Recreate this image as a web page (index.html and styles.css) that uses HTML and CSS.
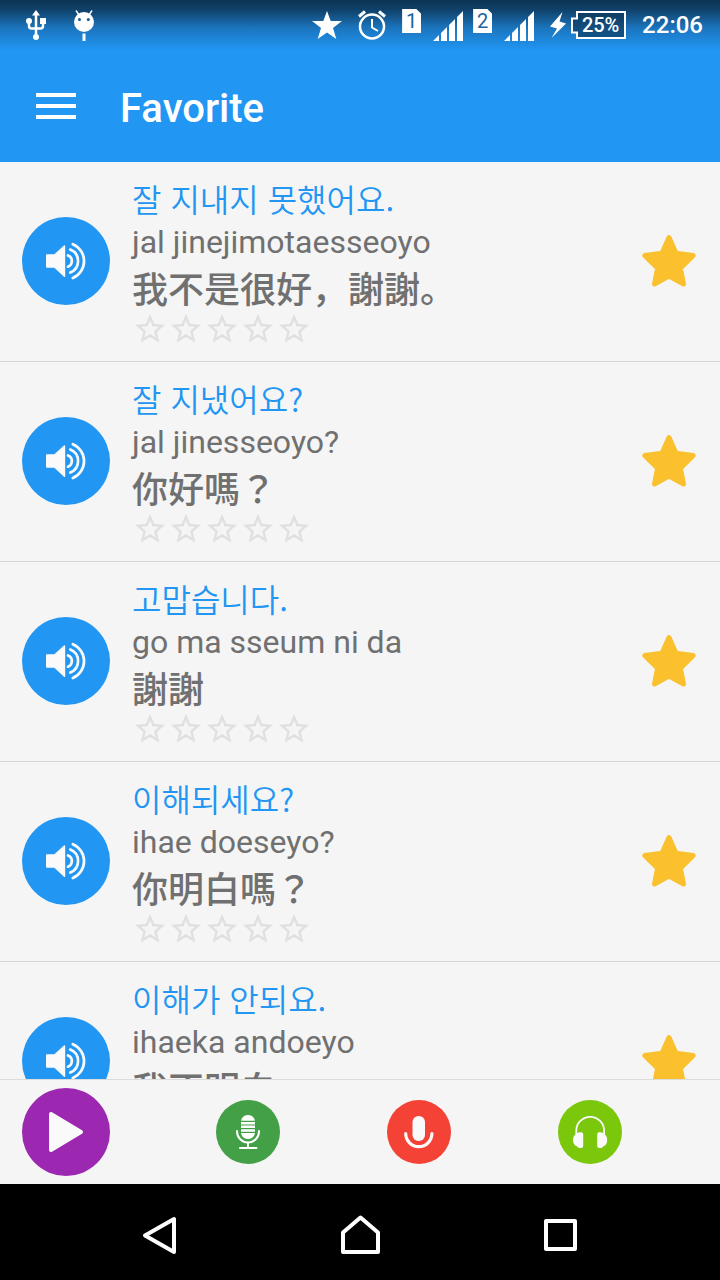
FILE: index.html
```html
<!DOCTYPE html>
<html lang="en">
<head>
  <meta charset="UTF-8">
  <title>Favorite</title>
  <meta name="viewport" content="width=device-width, initial-scale=1.0">
  <link rel="stylesheet" href="styles.css">
</head>
<body>

  <!-- Shared icons -->
  <svg class="sprite" aria-hidden="true">
    <symbol id="speaker" viewBox="0 0 88 88">
      <path d="M25 37.3h7.3L42 28.5q1.200-.6 1.200.8v29.600q0 1.400-1.200.8L32.300 50.800H25q-1 0-1-1V38.300q0-1 1-1z" fill="#fafafa"/>
      <path d="M46 38.500a6 6 0 0 1 0 11.200M48.300 32.600a12.400 12.400 0 0 1 0 23M50.800 27.200a18.300 18.300 0 0 1 0 33.800" fill="none" stroke="#fafafa" stroke-width="2.700" stroke-linecap="round"/>
    </symbol>
    <symbol id="rate" viewBox="0 0 24 24">
      <path d="M22 9.240l-7.190-.62L12 2 9.190 8.630 2 9.240l5.460 4.730L5.820 21 12 17.270 18.180 21l-1.630-7.030L22 9.240zM12 15.400l-3.760 2.270 1-4.280-3.320-2.880 4.380-.38L12 6.100l1.710 4.040 4.380.38-3.320 2.880 1 4.280L12 15.400z" fill="#e0e0e0"/>
    </symbol>
    <symbol id="favorite" viewBox="1 -1 56 56">
      <path d="M28 3.500L35 19.300 52.200 21.500 39.400 34.300 42.500 50 28 42 13.500 50 16.600 34.300 3.800 21.500 21 19.300z" fill="#fbc02d" stroke="#fbc02d" stroke-width="5" stroke-linejoin="round"/>
    </symbol>
    <symbol id="signal" viewBox="0 0 30 30">
      <path d="M0 30L6 24v6zM8 22l6-6v14H8zM16 14l6-6v22h-6zM24 6l6-6v30h-6z" fill="#fff"/>
    </symbol>
  </svg>

  <!-- Header -->
  <header class="header">
    <div class="status">
      <div class="status-left">
        <svg width="20" height="30" viewBox="0 0 20 30">
          <path d="M10 2v25M3 11v5q0 2.500 2.500 2.500h9q2.500 0 2.500-2.500v-5" fill="none" stroke="#fff" stroke-width="2.500"/>
          <path d="M10 0l4 5.500H6z" fill="#fff"/>
          <circle cx="3" cy="11" r="3" fill="#fff"/>
          <rect x="14" y="8" width="6" height="6" fill="#fff"/>
          <circle cx="10" cy="27" r="3" fill="#fff"/>
        </svg>
        <svg width="20" height="31" viewBox="0 0 20 31">
          <path d="M5 5L2 .5M15 5l3-4.500" stroke="#fff" stroke-width="1.500"/>
          <circle cx="10" cy="12" r="10" fill="#fff"/>
          <circle cx="5.500" cy="9.500" r="1.500" fill="#175a90"/>
          <circle cx="14.300" cy="9.500" r="1.500" fill="#175a90"/>
          <rect x="8.500" y="23.500" width="3" height="7.500" fill="#fff"/>
        </svg>
      </div>
      <div class="status-right">
        <svg width="30" height="30" viewBox="0 0 30 30">
          <path d="M15 1l3.700 10H30l-9 7 3.300 11L15 22.500 5.700 29 9 18 0 11h11.300z" fill="#fff"/>
        </svg>
        <svg width="28" height="30" viewBox="0 0 28 30">
          <circle cx="14" cy="16.500" r="12" fill="none" stroke="#fff" stroke-width="2.500"/>
          <path d="M14 9v8.500l6 3.500" fill="none" stroke="#fff" stroke-width="2"/>
          <path d="M1 6.500l6-5M27 6.500l-6-5" stroke="#fff" stroke-width="3"/>
        </svg>
        <div class="sims">
          <span class="sim">1</span>
          <svg width="30" height="30"><use href="#signal"/></svg>
          <span class="sim">2</span>
          <svg width="30" height="30"><use href="#signal"/></svg>
        </div>
        <div class="power">
          <svg width="16" height="26" viewBox="0 0 16 26">
            <path d="M12.500 0L0 14.500l7 2L1.500 26 16 11.500l-6.500-2z" fill="#fff"/>
          </svg>
          <span class="battery">
            <svg width="55" height="28" viewBox="0 0 55 28">
              <path d="M6 1h48v26H6v-5.500H1v-14h5z" fill="#0d3453" fill-opacity=".6" stroke="#fff" stroke-width="2"/>
            </svg>
            <span class="battery-text">25%</span>
          </span>
        </div>
        <span class="time">22:06</span>
      </div>
    </div>
    <div class="toolbar">
      <button class="menu-btn" aria-label="Menu">
        <svg width="40" height="26" viewBox="0 0 40 26">
          <path d="M0 2h40M0 13h40M0 24h40" stroke="#fff" stroke-width="4"/>
        </svg>
      </button>
      <h1 class="title">Favorite</h1>
    </div>
  </header>

  <!-- Phrases -->
  <ul class="list">
    <li class="row">
      <button class="round-btn big blue" aria-label="Listen"><svg class="icon"><use href="#speaker"/></svg></button>
      <div class="phrase">
        <div class="korean" lang="ko">잘 지내지 못했어요.</div>
        <div class="latin">jal jinejimotaesseoyo</div>
        <div class="chinese">我不是很好，謝謝。</div>
        <div class="rating">
          <svg><use href="#rate"/></svg><svg><use href="#rate"/></svg><svg><use href="#rate"/></svg><svg><use href="#rate"/></svg><svg><use href="#rate"/></svg>
        </div>
      </div>
      <button class="fav-btn" aria-label="Favorite"><svg class="icon"><use href="#favorite"/></svg></button>
    </li>
    <li class="row">
      <button class="round-btn big blue" aria-label="Listen"><svg class="icon"><use href="#speaker"/></svg></button>
      <div class="phrase">
        <div class="korean" lang="ko">잘 지냈어요?</div>
        <div class="latin">jal jinesseoyo?</div>
        <div class="chinese">你好嗎？</div>
        <div class="rating">
          <svg><use href="#rate"/></svg><svg><use href="#rate"/></svg><svg><use href="#rate"/></svg><svg><use href="#rate"/></svg><svg><use href="#rate"/></svg>
        </div>
      </div>
      <button class="fav-btn" aria-label="Favorite"><svg class="icon"><use href="#favorite"/></svg></button>
    </li>
    <li class="row">
      <button class="round-btn big blue" aria-label="Listen"><svg class="icon"><use href="#speaker"/></svg></button>
      <div class="phrase">
        <div class="korean" lang="ko">고맙습니다.</div>
        <div class="latin">go ma sseum ni da</div>
        <div class="chinese">謝謝</div>
        <div class="rating">
          <svg><use href="#rate"/></svg><svg><use href="#rate"/></svg><svg><use href="#rate"/></svg><svg><use href="#rate"/></svg><svg><use href="#rate"/></svg>
        </div>
      </div>
      <button class="fav-btn" aria-label="Favorite"><svg class="icon"><use href="#favorite"/></svg></button>
    </li>
    <li class="row">
      <button class="round-btn big blue" aria-label="Listen"><svg class="icon"><use href="#speaker"/></svg></button>
      <div class="phrase">
        <div class="korean" lang="ko">이해되세요?</div>
        <div class="latin">ihae doeseyo?</div>
        <div class="chinese">你明白嗎？</div>
        <div class="rating">
          <svg><use href="#rate"/></svg><svg><use href="#rate"/></svg><svg><use href="#rate"/></svg><svg><use href="#rate"/></svg><svg><use href="#rate"/></svg>
        </div>
      </div>
      <button class="fav-btn" aria-label="Favorite"><svg class="icon"><use href="#favorite"/></svg></button>
    </li>
    <li class="row">
      <button class="round-btn big blue" aria-label="Listen"><svg class="icon"><use href="#speaker"/></svg></button>
      <div class="phrase">
        <div class="korean" lang="ko">이해가 안되요.</div>
        <div class="latin">ihaeka andoeyo</div>
        <div class="chinese">我不明白</div>
        <div class="rating">
          <svg><use href="#rate"/></svg><svg><use href="#rate"/></svg><svg><use href="#rate"/></svg><svg><use href="#rate"/></svg><svg><use href="#rate"/></svg>
        </div>
      </div>
      <button class="fav-btn" aria-label="Favorite"><svg class="icon"><use href="#favorite"/></svg></button>
    </li>
  </ul>

  <!-- Player -->
  <div class="player">
    <button class="round-btn big purple" aria-label="Play">
      <svg class="icon" viewBox="0 0 88 88">
        <path d="M29 26l30 18-30 18z" fill="#fafafa" stroke="#fafafa" stroke-width="4" stroke-linejoin="round"/>
      </svg>
    </button>
    <div class="player-tools">
      <button class="round-btn green" aria-label="Studio microphone">
        <svg class="icon" viewBox="0 0 64 64">
          <rect x="25" y="15" width="14" height="24" rx="6.500" fill="#fff"/>
          <path d="M25 21.300h14M25 25h14M25 28.700h14M25 32.400h14" stroke="#43a047" stroke-width="1.200"/>
          <path d="M21 31v.5a11 11 0 0 0 22 0V31M32 43v5M24 48h16.500" fill="none" stroke="#fff" stroke-width="2" stroke-linecap="round"/>
        </svg>
      </button>
      <button class="round-btn red" aria-label="Record">
        <svg class="icon" viewBox="0 0 64 64">
          <rect x="25.500" y="16" width="12.500" height="25" rx="6" fill="#fafafa"/>
          <path d="M18.700 33.500a13.100 13.100 0 0 0 26.200 0" fill="none" stroke="#fafafa" stroke-width="3.200" stroke-linecap="round"/>
        </svg>
      </button>
      <button class="round-btn lime" aria-label="Headphones">
        <svg class="icon" viewBox="0 0 64 64">
          <path d="M18.300 35v-4.300a13.900 13.900 0 0 1 27.800 0V35" fill="none" stroke="#fafafa" stroke-width="1.800"/>
          <path d="M22 32.300h1.200q2 0 2 2V46q0 2-2 2H21.500q-1.800 0-2.500-1.700-4-1.300-4-6 0-4.800 3.300-6 1-2 3.700-2zM42.400 32.300h-1.200q-2 0-2 2V46q0 2 2 2h1.700q1.800 0 2.500-1.700 3.800-1.300 3.800-6 0-4.800-3.200-6-1-2-3.600-2z" fill="#fafafa"/>
        </svg>
      </button>
    </div>
  </div>

  <!-- System navigation -->
  <nav class="navbar">
    <button class="nav-btn" aria-label="Back">
      <svg width="48" height="48" viewBox="0 0 48 48"><path d="M9 27.500L38 11v33z"/></svg>
    </button>
    <button class="nav-btn" aria-label="Home">
      <svg width="48" height="48" viewBox="0 0 48 48"><path d="M24.500 9.500L42 24.500V44H7V24.500z"/></svg>
    </button>
    <button class="nav-btn" aria-label="Recent apps">
      <svg width="48" height="48" viewBox="0 0 48 48"><path d="M10 13h29v28H10z"/></svg>
    </button>
  </nav>

</body>
</html>
```
FILE: styles.css
```css
* {
  box-sizing: border-box;
}

body {
  margin: 0;
  height: 100vh;
  display: flex;
  flex-direction: column;
  font-family: Roboto, sans-serif;
  background: #f5f5f5;
  color: #707070;
}

button {
  padding: 0;
  border: none;
  background: none;
  cursor: pointer;
}

svg {
  display: block;
  flex: none;
}

.sprite {
  position: absolute;
  width: 0;
  height: 0;
}

/* Header */
.header {
  flex: none;
  color: #fff;
  background: #2196f3;
}

.status {
  display: flex;
  justify-content: space-between;
  align-items: center;
  height: 50px;
  padding: 0 17px 0 26px;
  background: linear-gradient(#0c3352, #10426b 20%, #1b75bd 56%, #2196f3);
}

.status-left {
  display: flex;
  align-items: center;
  gap: 28px;
}

.status-right {
  display: flex;
  align-items: center;
  gap: 16px;
}

.sims {
  display: flex;
  align-items: center;
  gap: 10px;
}

.sims svg {
  margin-top: 2px;
}

.sim {
  width: 19px;
  height: 24px;
  margin: 0 2px 8px 0;
  background: #fff;
  color: #1a659f;
  font-size: 20px;
  line-height: 24px;
  text-align: center;
  clip-path: polygon(0 0, 75% 0, 100% 20%, 100% 100%, 0 100%);
}

.power {
  display: flex;
  align-items: center;
  gap: 5px;
}

.battery {
  position: relative;
}

.battery-text {
  position: absolute;
  inset: 0 0 0 4px;
  font-size: 20px;
  font-weight: 500;
  line-height: 28px;
  text-align: center;
}

.time {
  font-size: 24px;
  font-weight: 500;
}

.toolbar {
  display: flex;
  align-items: center;
  gap: 44px;
  height: 112px;
  padding: 0 36px;
}

.title {
  margin: 0;
  padding-top: 4px;
  font-size: 40px;
  font-weight: 500;
}

/* List */
.list {
  flex: 1;
  min-height: 0;
  margin: 0;
  padding: 0;
  list-style: none;
  overflow-y: auto;
  scrollbar-width: none;
}

.row {
  display: flex;
  align-items: center;
  gap: 22px;
  padding: 0 22px 1px;
  border-bottom: 1px solid #d6d6d6;
}

.phrase {
  flex: 1;
  min-width: 0;
  padding: 17px 0 13px;
}

.korean {
  margin-bottom: 4px;
  font-family: "Noto Sans CJK KR", sans-serif;
  font-size: 32px;
  font-weight: 350;
  line-height: 38px;
  color: #2196f3;
}

.latin {
  font-size: 32px;
  line-height: 42px;
}

.chinese {
  font-family: "Noto Sans CJK JP", sans-serif;
  font-size: 36px;
  font-weight: 500;
  line-height: 48px;
}

.rating {
  display: flex;
}

.rating svg {
  width: 36px;
  height: 36px;
}

.icon {
  width: 100%;
  height: 100%;
}

.fav-btn {
  flex: none;
  width: 56px;
  height: 56px;
}

.round-btn {
  flex: none;
  width: 64px;
  height: 64px;
  border-radius: 50%;
}

.big {
  width: 88px;
  height: 88px;
}

.blue {
  background: #2196f3;
}

.purple {
  background: #9c27b0;
}

.green {
  background: #43a047;
}

.red {
  background: #f44336;
}

.lime {
  background: #7ac70c;
}

/* Player */
.player {
  flex: none;
  display: flex;
  align-items: center;
  padding: 8px 45px 8px 22px;
  border-top: 1px solid #dcdcdc;
}

.player-tools {
  flex: 1;
  display: flex;
  justify-content: space-around;
  margin-left: 53px;
}

/* System navigation */
.navbar {
  flex: none;
  display: flex;
  height: 96px;
  padding: 0 60px;
  background: #000;
}

.nav-btn {
  flex: 1;
  display: flex;
  align-items: center;
  justify-content: center;
}

.nav-btn svg {
  fill: none;
  stroke: #fff;
  stroke-width: 4;
  stroke-linejoin: round;
}
```
